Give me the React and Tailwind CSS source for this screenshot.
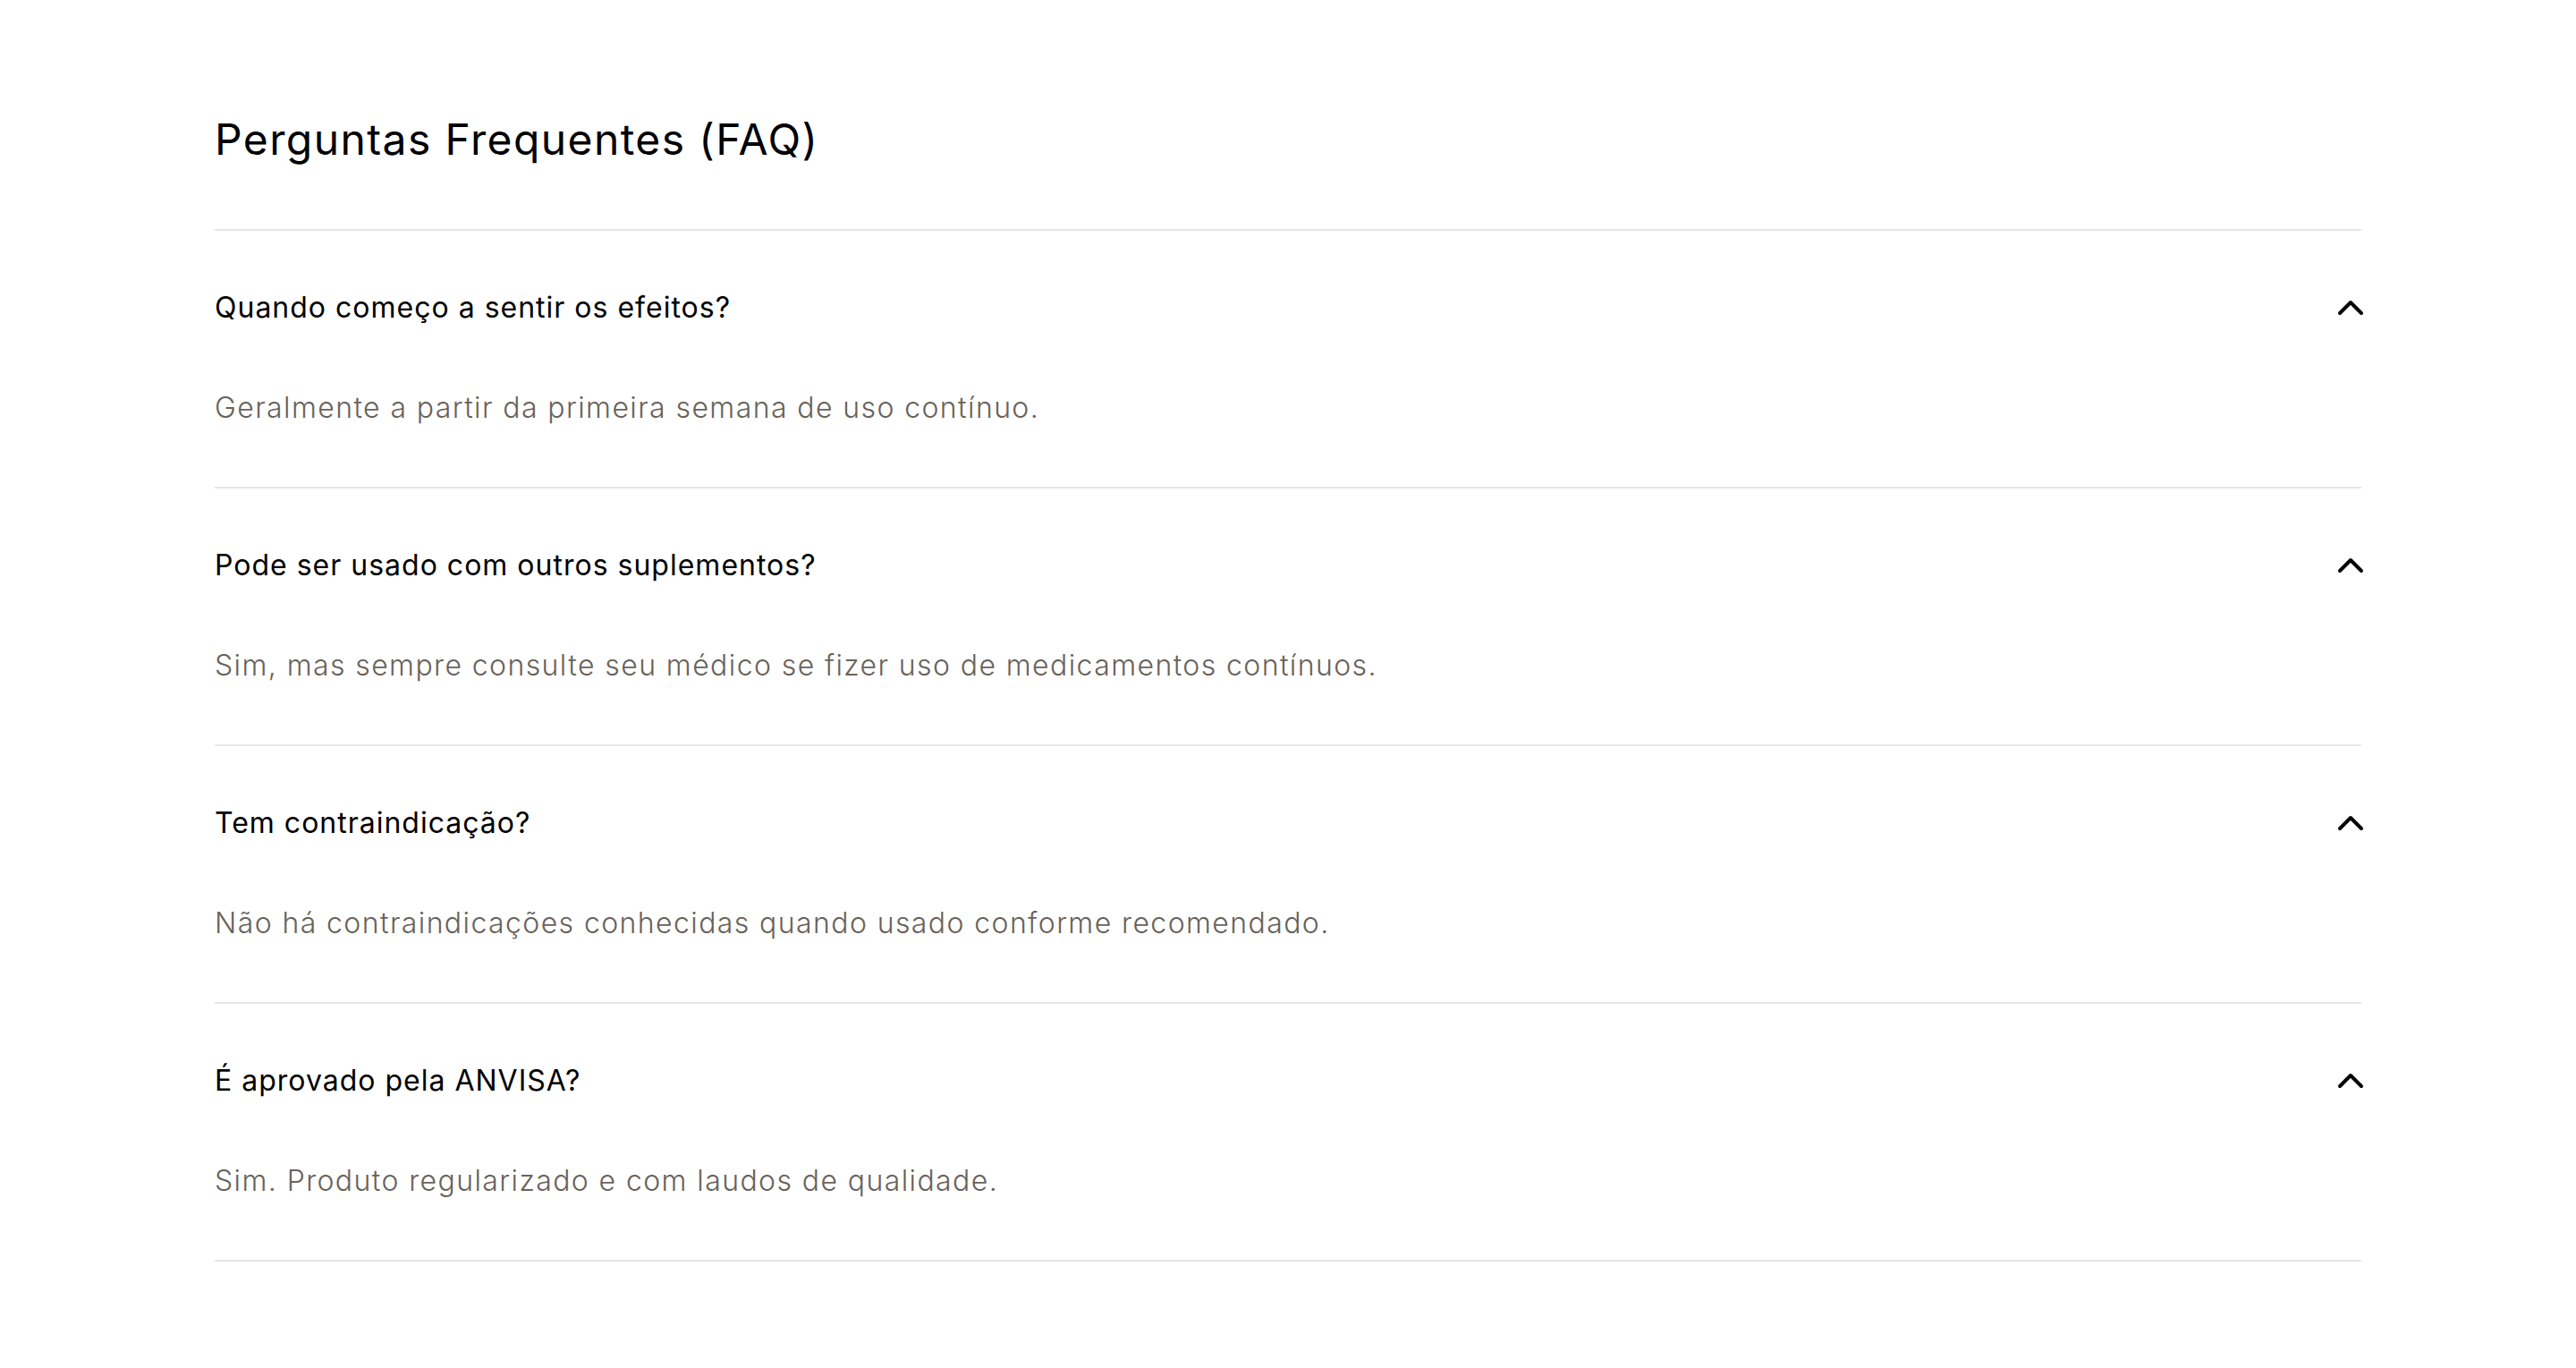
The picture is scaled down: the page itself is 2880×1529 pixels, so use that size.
import { ChevronUp } from 'lucide-react';

const faqs = [
  {
    q: 'Quando começo a sentir os efeitos?',
    a: 'Geralmente a partir da primeira semana de uso contínuo.',
  },
  {
    q: 'Pode ser usado com outros suplementos?',
    a: 'Sim, mas sempre consulte seu médico se fizer uso de medicamentos contínuos.',
  },
  {
    q: 'Tem contraindicação?',
    a: 'Não há contraindicações conhecidas quando usado conforme recomendado.',
  },
  {
    q: 'É aprovado pela ANVISA?',
    a: 'Sim. Produto regularizado e com laudos de qualidade.',
  },
];

export default function App() {
  return (
    <section
      className="min-h-screen bg-white pt-[120px] pb-[120px]"
      style={{ fontFamily: 'Inter, "Noto Sans", sans-serif' }}>
      <div className="max-w-[2400px] mx-auto">
        <h2 className="text-[48px] leading-[72px] font-normal tracking-[1.4px] text-black mb-16">
          Perguntas Frequentes (FAQ)
        </h2>

        <div className="border-t-2 border-[#e5e5e5]">
          {faqs.map((item) => (
            <div key={item.q} className="border-b-2 border-[#e5e5e5]">
              <button className="w-full flex items-center justify-between pt-[62px] pb-16 text-left">
                <span className="text-[32px] leading-[48px] tracking-[1px] text-black">
                  {item.q}
                </span>
                <ChevronUp size={48} strokeWidth={2} className="text-black -mr-3" />
              </button>
              {/* answer always open */}
              <p className="text-[32px] leading-[48px] font-light tracking-[1.4px] text-[#68625a] pb-16">
                {item.a}
              </p>
            </div>
          ))}
        </div>
      </div>
    </section>
  );
}
